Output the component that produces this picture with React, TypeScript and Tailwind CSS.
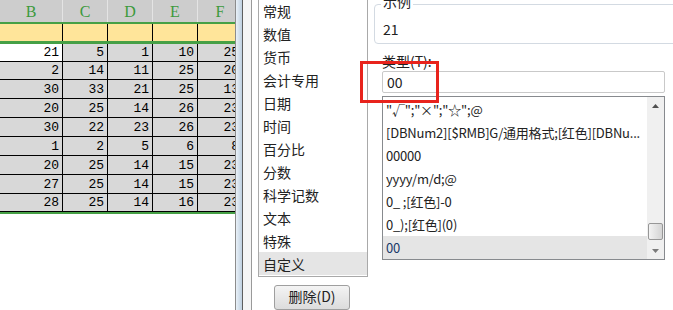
import React from "react";

const cols = ["B", "C", "D", "E", "F"];
const widths = [63, 45, 45, 45, 45];

const rows: number[][] = [
  [21, 5, 1, 10, 25],
  [2, 14, 11, 25, 20],
  [30, 33, 21, 25, 13],
  [20, 25, 14, 26, 23],
  [30, 22, 23, 26, 23],
  [1, 2, 5, 6, 8],
  [20, 25, 14, 15, 23],
  [27, 25, 14, 15, 23],
  [28, 25, 14, 16, 23],
];
const rowH = [18, 18, 19, 19, 19, 19, 19, 19, 18];

const categories = [
  "常规",
  "数值",
  "货币",
  "会计专用",
  "日期",
  "时间",
  "百分比",
  "分数",
  "科学记数",
  "文本",
  "特殊",
  "自定义",
];

const formats = [
  '"√";"×";"☆";@',
  "[DBNum2][$RMB]G/通用格式;[红色][DBNu...",
  "00000",
  "yyyy/m/d;@",
  "0_ ;[红色]-0",
  "0_);[红色](0)",
  "00",
];

const Sheet = () => (
  <div
    className="w-[235px] shrink-0 overflow-hidden bg-white"
    style={{ fontFamily: '"Liberation Mono", monospace' }}
  >
    <div className="w-[243px]">
      {/* column headers */}
      <div className="flex h-[22px] bg-[#cdcdcd]">
        {cols.map((c, i) => (
          <div
            key={c}
            className="flex items-center justify-center border-r border-[#e4e4e4] pt-[2px] text-[16px] text-[#3c9a3c]"
            style={{ width: widths[i], fontFamily: '"Liberation Serif", serif' }}
          >
            {c}
          </div>
        ))}
      </div>
      <div className="h-[2px] bg-[#46a046]" />
      {/* yellow row */}
      <div className="flex h-[17px] bg-[#ffe59a]">
        {cols.map((c, i) => (
          <div key={c} className="border-r border-black" style={{ width: widths[i] }} />
        ))}
      </div>
      <div className="h-[3px] bg-[#46a046]" />
      {rows.map((r, ri) => (
        <div
          key={ri}
          className="flex border-b border-black bg-[#d8d8d8] text-[13px] leading-none text-black"
          style={{ height: rowH[ri] }}
        >
          {r.map((v, ci) => (
            <div
              key={ci}
              className={`flex items-end justify-end border-r border-black pr-[3px] pb-[2px] ${
                ri === 0 && ci === 0 ? "bg-white" : ""
              }`}
              style={{ width: widths[ci] }}
            >
              {v}
            </div>
          ))}
        </div>
      ))}
      <div className="h-[2px] bg-[#46a046]" />
    </div>
  </div>
);

const App = () => {
  return (
    <div
      className="relative flex h-[310px] w-[673px] overflow-hidden bg-white text-[14px] text-[#222]"
      style={{ fontFamily: '"Noto Sans CJK SC", "Noto Sans", sans-serif' }}
    >
      <Sheet />
      {/* window frame */}
      <div className="w-[7px] shrink-0 border-l border-[#8c8c8c] bg-gradient-to-r from-[#e9f1f8] to-[#bfd0e0]" />
      <div className="w-px shrink-0 bg-[#5e5e5e]" />
      <div className="w-[8px] shrink-0 bg-[#f5f5f5]" />
      <div className="flex min-w-0 flex-1 border-l border-[#9a9a9a] bg-white pl-[6px]">
        {/* category list */}
        <div className="flex w-[110px] shrink-0 flex-col">
          <div className="-mt-[3px] border border-[#a9a9a9] bg-white py-px">
            {categories.map((c) => (
              <div
                key={c}
                className={`flex h-[23px] items-center pl-[4px] leading-none ${
                  c === "自定义" ? "bg-[#e5e5e5]" : ""
                }`}
              >
                {c}
              </div>
            ))}
          </div>
          <button className="ml-[16px] mt-[8px] h-[32px] w-[76px] rounded-[3px] border border-[#9f9f9f] bg-gradient-to-b from-[#f4f4f4] to-[#dcdcdc] pb-[4px] text-[14px] leading-none text-[#222]">
            删除(D)
          </button>
        </div>
        {/* right side */}
        <div className="ml-[6px] flex min-w-0 flex-1 flex-col">
          <div className="relative -mr-[10px] mt-[4px] h-[40px] rounded-l-[4px] border border-[#d3dae2] pl-[8px]">
            <div className="absolute -top-[11px] left-[6px] bg-white px-[2px] leading-none">示例</div>
            <div className="pt-[17px] leading-none">21</div>
          </div>
          <div className="ml-[8px] mt-[10px] leading-none">类型(T):</div>
          <div className="ml-[8px] mr-[8px] mt-[3px] flex h-[22px] items-center rounded-[2px] border border-[#c9c9c9] pl-[4px] leading-none">
            00
          </div>
          <div className="ml-[8px] mr-[8px] mt-[3px] flex h-[164px] border border-[#878a8e] bg-white">
            <div className="min-w-0 flex-1 overflow-hidden py-px text-[13px] tracking-[-0.2px]">
              {formats.map((f) => (
                <div
                  key={f}
                  className={`flex h-[23px] items-center whitespace-nowrap pl-[3px] leading-none ${
                    f === "00" ? "bg-[#e5e5e5] text-[#1a3a6a]" : ""
                  }`}
                >
                  {f}
                </div>
              ))}
            </div>
            <div className="flex w-[17px] shrink-0 flex-col items-center bg-[#f0f0f0]">
              <div className="flex h-[17px] items-center justify-center">
                <svg width="7" height="4" viewBox="0 0 7 4">
                  <path d="M3.5 0 L7 4 L0 4 Z" fill="#505050" />
                </svg>
              </div>
              <div className="flex-1" />
              <div className="mb-[2px] h-[17px] w-[15px] rounded-[2px] border border-[#979797] bg-gradient-to-r from-[#f3f3f3] to-[#d4d4d4]" />
              <div className="flex h-[17px] items-center justify-center">
                <svg width="7" height="4" viewBox="0 0 7 4">
                  <path d="M0 0 L7 0 L3.5 4 Z" fill="#7a7a7a" />
                </svg>
              </div>
            </div>
          </div>
        </div>
      </div>
      {/* red highlight box */}
      <div className="absolute left-[360px] top-[61px] h-[42px] w-[79px] border-[3px] border-[#e8231c]" />
    </div>
  );
};

export default App;
